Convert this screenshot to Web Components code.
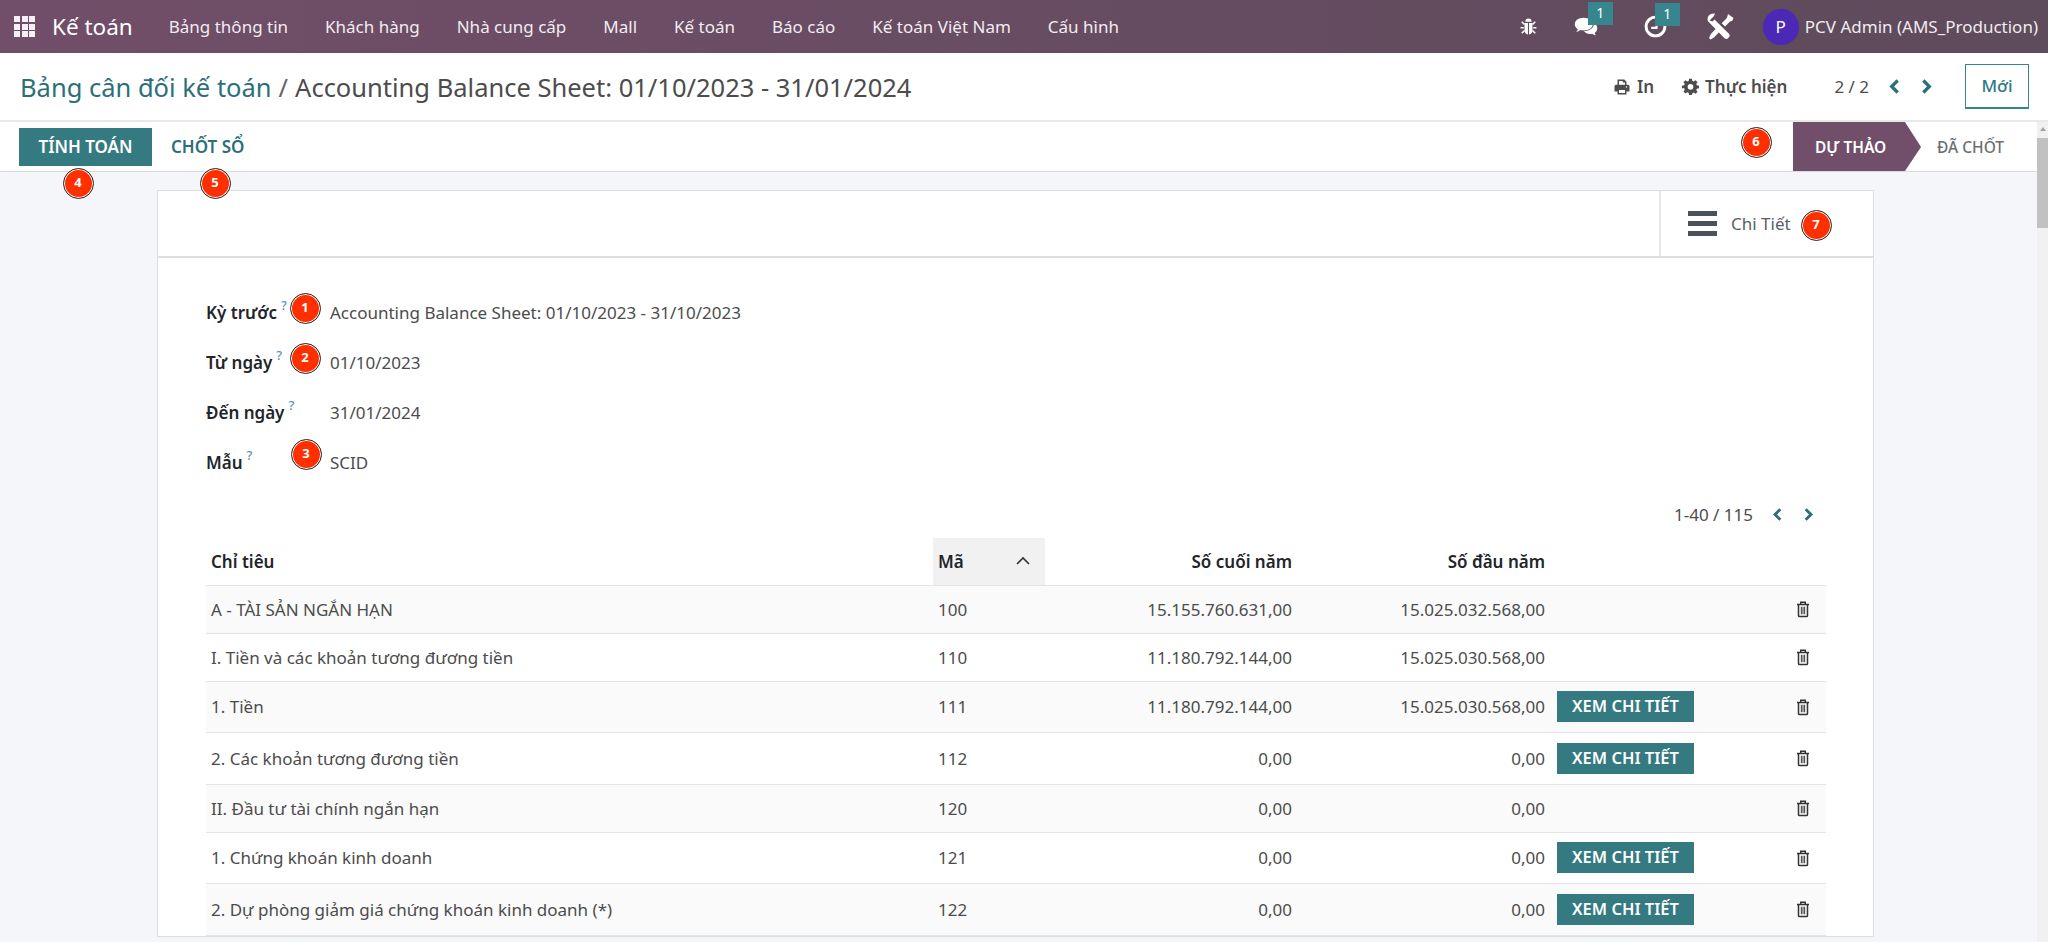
<!DOCTYPE html>
<html lang="vi">
<head>
<meta charset="utf-8">
<title>Bảng cân đối kế toán</title>
<style>
  html, body { margin: 0; height: 100%; overflow: hidden; }
  body { position: relative; display: flex; flex-direction: column; font-family: "Noto Sans", "Open Sans", sans-serif; font-size: 17px; color: #4c4c4c; background: #fff; }
</style>
</head>
<body>
<template id="icons">
  <svg id="print" viewBox="0 0 24 24"><path fill="currentColor" d="M6 2h9l3 3v5h-2V6h-3V4H8v6H6V2zM2 11a2 2 0 0 1 2-2h16a2 2 0 0 1 2 2v7h-4v4H6v-4H2v-7zm6 5v4h8v-4H8zm10-5a1 1 0 1 0 0 2 1 1 0 0 0 0-2z"/></svg>
  <svg id="cog" viewBox="0 0 24 24"><path fill="currentColor" fill-rule="evenodd" d="M10 1h4l.6 3.1 1.9.8L19.100 3.100l2.800 2.800-1.800 2.600.8 1.900L24 11v3.500l-3.100.6-.8 1.900 1.800 2.600-2.800 2.800-2.600-1.800-1.900.8L14 24h-4l-.6-3.100-1.900-.8-2.600 1.800-2.800-2.800 1.800-2.600-.8-1.900L0 14.500V11l3.100-.6.8-1.900L2.100 5.900l2.800-2.800 2.600 1.800 1.900-.8L10 1zm2 7.500a4 4 0 1 0 0 8 4 4 0 0 0 0-8z"/></svg>
  <svg id="bug" viewBox="0 0 24 24"><path fill="currentColor" d="M8 6a4 4 0 0 1 8 0H8zM7 7.500h4.300V22C8.500 21.600 7 19.500 7 17V7.500zm5.700 0H17V17c0 2.500-1.500 4.600-4.300 5V7.500z"/><path fill="none" stroke="currentColor" stroke-width="2" d="M7 9.500 3.500 6M17 9.500 20.500 6M6 13.500H2M18 13.500h4M7 17l-3.500 3.500M17 17l3.500 3.500"/></svg>
  <svg id="comments" viewBox="0 0 28 24"><path fill="currentColor" d="M10.500 2C5 2 .8 5 .8 9c0 2.200 1.300 4.100 3.400 5.400-.4 1.100-1 2-1.900 2.900 1.800-.3 3.400-1 4.700-2 1.100.3 2.300.4 3.500.4 5.500 0 9.700-3 9.700-6.700S16 2 10.500 2z"/><path fill="currentColor" d="M21.500 8c.2 4.800-4.300 8.400-10.800 8.700 1.400 1.700 3.800 2.800 6.500 2.800.8 0 1.600-.1 2.300-.3 1.100.9 2.500 1.500 4.300 1.800-.7-.7-1.300-1.600-1.600-2.600 1.800-1.200 2.900-2.900 2.900-4.700 0-2.300-1.300-4.400-3.100-5.700z"/></svg>
  <svg id="clock" viewBox="0 0 24 24"><circle cx="12" cy="12" r="9.800" fill="none" stroke="currentColor" stroke-width="3"/><path fill="none" stroke="currentColor" stroke-width="2.400" d="M13 6.500V13.500H7.500"/></svg>
  <svg id="tools" viewBox="0 0 28 28"><path fill="currentColor" d="M2.500 7.500 7 3l1-2.500C5.500.2 3 1 1.600 2.800.4 4.600.2 6.500 1 8.200l16.500 17c1 1 2.500 1 3.500 0l.9-.9c1-1 1-2.500 0-3.500L7.500 6.500 5.500 8.500z"/><path fill="currentColor" d="M21 1l5.500 4-1.200 2.800-2.300.7-5 5-3.300-3.300 5-5 .8-2.200zM9.800 14.800l3.300 3.300-5.800 6.200-3.800 2.200-1.500-1.500 1.900-4 5.900-6.200z"/></svg>
  <svg id="left" viewBox="0 0 24 24"><path fill="none" stroke="currentColor" stroke-width="4.600" d="M16.500 3.500 8 12l8.500 8.500"/></svg>
  <svg id="right" viewBox="0 0 24 24"><path fill="none" stroke="currentColor" stroke-width="4.600" d="M7.500 3.500 16 12l-8.500 8.500"/></svg>
  <svg id="trash" viewBox="0 0 24 24"><path fill="none" stroke="currentColor" stroke-width="2" d="M4 6h16M9 6V3h6v3M6 6v14.500a1.500 1.500 0 0 0 1.500 1.500h9a1.500 1.500 0 0 0 1.500-1.500V6"/><path fill="none" stroke="currentColor" stroke-width="1.300" d="M9.800 9v10M12 9v10M14.200 9v10"/></svg>
</template>

<app-navbar></app-navbar>
<control-panel></control-panel>
<main-scroller>
  <action-bar></action-bar>
  <form-sheet>
    <form-field label="Kỳ trước">Accounting Balance Sheet: 01/10/2023 - 31/10/2023</form-field>
    <form-field label="Từ ngày">01/10/2023</form-field>
    <form-field label="Đến ngày">31/01/2024</form-field>
    <form-field label="Mẫu">SCID</form-field>
    <balance-table></balance-table>
  </form-sheet>
</main-scroller>

<step-badge style="left:305px;top:308px">1</step-badge>
<step-badge style="left:305px;top:358px">2</step-badge>
<step-badge style="left:306px;top:454px">3</step-badge>
<step-badge style="left:78px;top:183px">4</step-badge>
<step-badge style="left:215px;top:183px">5</step-badge>
<step-badge style="left:1756px;top:142px">6</step-badge>
<step-badge style="left:1816px;top:225px">7</step-badge>

<script>
const icon = ( name, size, extra = '' ) => {
  const svg = document.getElementById( 'icons' ).content.getElementById( name ).outerHTML;
  return svg.replace( '<svg ', `<svg width="${size}" height="${size}" style="display:block;flex:none;${extra}" ` );
};

class AppNavbar extends HTMLElement {
  connectedCallback () {
    const menus = [ 'Bảng thông tin', 'Khách hàng', 'Nhà cung cấp', 'Mall', 'Kế toán', 'Báo cáo', 'Kế toán Việt Nam', 'Cấu hình' ];
    this.attachShadow( { mode: 'open' } );
    this.shadowRoot.innerHTML = /*html*/`
    <style>
      :host { display: flex; align-items: center; flex: none; height: 53px; padding-left: 14px; color: #fff; background: linear-gradient(90deg, #714e69, #5e4b5b); }
      .apps { display: grid; grid-template-columns: repeat(3, 6px); gap: 1.500px; margin-right: 17px; }
      .apps i { height: 6px; background: #f4f0f3; }
      .brand { font-size: 22.500px; margin-right: 36px; }
      nav { display: flex; gap: 37px; font-size: 17px; color: #f1ecf0; }
      .tray { display: flex; align-items: center; margin-left: auto; position: relative; height: 100%; padding-right: 10px; }
      .ico { position: relative; display: flex; }
      .count { position: absolute; width: 25px; height: 23px; top: -12px; left: 14px; background: #37858d; color: #fff; font-size: 14px; line-height: 21px; text-align: center; }
      .avatar { width: 36px; height: 36px; border-radius: 50%; background: #4b28b5; font-size: 17px; line-height: 36px; text-align: center; margin: 0 6px 0 0; }
      .name { font-size: 17px; color: #f1ecf0; white-space: nowrap; }
    </style>
    <div class="apps">${ '<i></i>'.repeat( 9 ) }</div>
    <div class="brand">Kế toán</div>
    <nav>${ menus.map( m => `<span>${ m }</span>` ).join( '' ) }</nav>
    <div class="tray">
      <span class="ico" style="margin-right:36px">${ icon( 'bug', 19 ) }</span>
      <span class="ico" style="margin-right:44px">${ icon( 'comments', 26 ) }<b class="count" style="font-weight:400">1</b></span>
      <span class="ico" style="margin-right:40px">${ icon( 'clock', 23 ) }<b class="count" style="font-weight:400;left:11px">1</b></span>
      <span class="ico" style="margin-right:28px">${ icon( 'tools', 28 ) }</span>
      <div class="avatar">P</div>
      <div class="name">PCV Admin (AMS_Production)</div>
    </div>
    `;
  }
}

class ControlPanel extends HTMLElement {
  connectedCallback () {
    this.attachShadow( { mode: 'open' } );
    this.shadowRoot.innerHTML = /*html*/`
    <style>
      :host { display: flex; align-items: center; flex: none; height: 67px; padding: 0 19px 0 20px; border-bottom: 2px solid #e8e8e8; background: #fff; }
      .crumbs { font-size: 25.500px; white-space: nowrap; color: #4c4c4c; }
      .crumbs a { color: #2d6f78; }
      .crumbs s { text-decoration: none; color: #666; margin: 0 7px; }
      .right { margin-left: auto; display: flex; align-items: center; color: #4c4c4c; font-size: 17px; }
      .btn { display: flex; align-items: center; gap: 6px; font-weight: 600; }
      .pager { margin: 0 0 0 47px; }
      .arrow { color: #2d6f78; display: flex; }
      .new { box-sizing: border-box; width: 64px; height: 45px; line-height: 41px; text-align: center; border: 1px solid #37858d; border-bottom-width: 2px; color: #2d7a80; font-weight: 500; margin-left: 30px; }
    </style>
    <div class="crumbs"><a>Bảng cân đối kế toán</a><s>/</s>Accounting Balance Sheet: 01/10/2023 - 31/01/2024</div>
    <div class="right">
      <div class="btn" style="margin-right:28px">${ icon( 'print', 18 ) }In</div>
      <div class="btn">${ icon( 'cog', 17 ) }Thực hiện</div>
      <div class="pager">2 / 2</div>
      <span class="arrow" style="margin-left:17px">${ icon( 'left', 17 ) }</span>
      <span class="arrow" style="margin-left:15px">${ icon( 'right', 17 ) }</span>
      <div class="new">Mới</div>
    </div>
    `;
  }
}

class MainScroller extends HTMLElement {
  connectedCallback () {
    this.attachShadow( { mode: 'open' } );
    this.shadowRoot.innerHTML = /*html*/`
    <style>
      :host { display: flex; flex: 1; min-height: 0; background: #f5f6fa; }
      .content { flex: 1; min-width: 0; display: flex; flex-direction: column; overflow: hidden; }
      .bar { flex: none; width: 11px; background: #f1f1f1; position: relative; }
      .bar::before { content: ""; position: absolute; top: 5px; left: 2.500px; border: 3px solid transparent; border-top: 0; border-bottom: 4px solid #a3a3a3; }
      .thumb { position: absolute; left: 0; right: 0; top: 16px; height: 90px; background: #c1c1c1; }
    </style>
    <div class="content"><slot></slot></div>
    <div class="bar"><div class="thumb"></div></div>
    `;
  }
}

class ActionBar extends HTMLElement {
  connectedCallback () {
    this.attachShadow( { mode: 'open' } );
    this.shadowRoot.innerHTML = /*html*/`
    <style>
      :host { display: flex; align-items: center; flex: none; height: 49px; padding-left: 19px; background: #fff; border-bottom: 1px solid #d8dadd; font-size: 17px; font-weight: 600; }
      .primary { height: 38px; line-height: 37px; width: 133px; text-align: center; background: #357a80; color: #fff; }
      .plain { margin-left: 19px; color: #2d6f78; }
      .status { margin-left: auto; align-self: stretch; display: flex; font-size: 15.500px; }
      .on { position: relative; width: 112px; padding-left: 22px; box-sizing: border-box; line-height: 50px; background: #714e69; color: #fff; }
      .on::after { content: ""; position: absolute; left: 100%; top: 0; border-left: 16px solid #714e69; border-top: 25px solid transparent; border-bottom: 24px solid transparent; }
      .off { width: 132px; padding-left: 32px; box-sizing: border-box; line-height: 50px; color: #6b6f74; font-weight: 500; }
    </style>
    <div class="primary">TÍNH TOÁN</div>
    <div class="plain">CHỐT SỔ</div>
    <div class="status"><div class="on">DỰ THẢO</div><div class="off">ĐÃ CHỐT</div></div>
    `;
  }
}

class FormSheet extends HTMLElement {
  connectedCallback () {
    this.attachShadow( { mode: 'open' } );
    this.shadowRoot.innerHTML = /*html*/`
    <style>
      :host { display: block; flex: none; margin: 18px 163px 0 157px; background: #fff; border: 1px solid #dcdee1; }
      .tabs { display: flex; justify-content: flex-end; height: 65px; border-bottom: 2px solid #dcdee1; }
      .tab { box-sizing: border-box; width: 214px; border-left: 2px solid #e6e7e9; display: flex; align-items: center; padding-left: 27px; gap: 14px; color: #5b6067; }
      .bars { width: 29px; display: grid; gap: 5px; }
      .bars i { height: 5px; background: #4c5057; }
      .body { padding: 29px 48px 0; }
    </style>
    <div class="tabs"><div class="tab"><div class="bars"><i></i><i></i><i></i></div>Chi Tiết</div></div>
    <div class="body"><slot></slot></div>
    `;
  }
}

class FormField extends HTMLElement {
  connectedCallback () {
    this.attachShadow( { mode: 'open' } );
    this.shadowRoot.innerHTML = /*html*/`
    <style>
      :host { display: grid; grid-template-columns: 124px 1fr; align-items: center; height: 50px; }
      .label { font-weight: 600; color: #212529; }
      sup { font-size: 13px; font-weight: 500; color: #5f93b3; line-height: 0; margin-left: 4px; vertical-align: 9px; }
    </style>
    <div class="label">${ this.getAttribute( 'label' ) }<sup>?</sup></div>
    <div><slot></slot></div>
    `;
  }
}

class BalanceTable extends HTMLElement {
  connectedCallback () {
    const rows = [
      [ 'A - TÀI SẢN NGẮN HẠN', '100', '15.155.760.631,00', '15.025.032.568,00', false ],
      [ 'I. Tiền và các khoản tương đương tiền', '110', '11.180.792.144,00', '15.025.030.568,00', false ],
      [ '1. Tiền', '111', '11.180.792.144,00', '15.025.030.568,00', true ],
      [ '2. Các khoản tương đương tiền', '112', '0,00', '0,00', true ],
      [ 'II. Đầu tư tài chính ngắn hạn', '120', '0,00', '0,00', false ],
      [ '1. Chứng khoán kinh doanh', '121', '0,00', '0,00', true ],
      [ '2. Dự phòng giảm giá chứng khoán kinh doanh (*)', '122', '0,00', '0,00', true ]
    ];
    const body = rows.map( ( [ name, code, end, start, more ] ) => `
      <tr class="${ more ? 'tall' : '' }">
        <td>${ name }</td><td>${ code }</td>
        <td class="num">${ end }</td><td class="num">${ start }</td>
        <td class="act">${ more ? '<span class="more">XEM CHI TIẾT</span>' : '' }</td>
        <td class="del">${ icon( 'trash', 18, 'margin:0 auto;color:#333;' ) }</td>
      </tr>` ).join( '' );
    this.attachShadow( { mode: 'open' } );
    this.shadowRoot.innerHTML = /*html*/`
    <style>
      :host { display: block; }
      .pager { display: flex; justify-content: flex-end; align-items: center; height: 47px; margin-top: 4px; padding-right: 9px; color: #4c4c4c; }
      .pager span { display: flex; color: #2d6f78; }
      table { width: 100%; table-layout: fixed; border-collapse: collapse; }
      th { height: 47px; text-align: left; font-weight: 600; color: #212529; padding: 0 5px; border-bottom: 1px solid #e3e4e6; box-sizing: border-box; }
      th.sorted { background: #f1f1f1; position: relative; }
      th.sorted svg { position: absolute; right: 14px; top: 15px; }
      td { height: 48px; padding: 0 5px; border-bottom: 1px solid #e3e4e6; white-space: nowrap; box-sizing: border-box; }
      tr.tall td { height: 51.500px; }
      tbody tr:nth-child(odd) td { background: #fafafa; }
      .num, th.num { text-align: right; }
      td.act { padding-left: 7px; }
      .more { display: inline-block; vertical-align: middle; width: 137px; height: 31px; line-height: 30px; text-align: center; background: #357a80; color: #fff; font-weight: 600; font-size: 16.500px; }
    </style>
    <div class="pager">1-40 / 115<span style="margin-left:17px">${ icon( 'left', 15 ) }</span><span style="margin-left:16px">${ icon( 'right', 15 ) }</span></div>
    <table>
      <colgroup><col style="width:727px"><col style="width:112px"><col style="width:252px"><col style="width:253px"><col style="width:230px"><col style="width:46px"></colgroup>
      <thead><tr>
        <th>Chỉ tiêu</th>
        <th class="sorted">Mã<svg width="16" height="16" viewBox="0 0 16 16"><path d="M2 11l6-6 6 6" fill="none" stroke="#333" stroke-width="1.600"/></svg></th>
        <th class="num">Số cuối năm</th><th class="num">Số đầu năm</th><th></th><th></th>
      </tr></thead>
      <tbody>${ body }</tbody>
    </table>
    `;
  }
}

class StepBadge extends HTMLElement {
  connectedCallback () {
    this.attachShadow( { mode: 'open' } );
    this.shadowRoot.innerHTML = /*html*/`
    <style>
      :host { position: absolute; box-sizing: border-box; width: 31px; height: 31px; margin: -15.500px 0 0 -15.500px; border-radius: 50%; background: #ff2f00; color: #fff; font-size: 13px; font-weight: 700; line-height: 27px; text-align: center; border: 1px solid #333; box-shadow: 0 0 0 1px #fff inset; }
    </style>
    <slot></slot>
    `;
  }
}

customElements.define( 'app-navbar', AppNavbar );
customElements.define( 'control-panel', ControlPanel );
customElements.define( 'main-scroller', MainScroller );
customElements.define( 'action-bar', ActionBar );
customElements.define( 'form-sheet', FormSheet );
customElements.define( 'form-field', FormField );
customElements.define( 'balance-table', BalanceTable );
customElements.define( 'step-badge', StepBadge );
</script>
</body>
</html>
